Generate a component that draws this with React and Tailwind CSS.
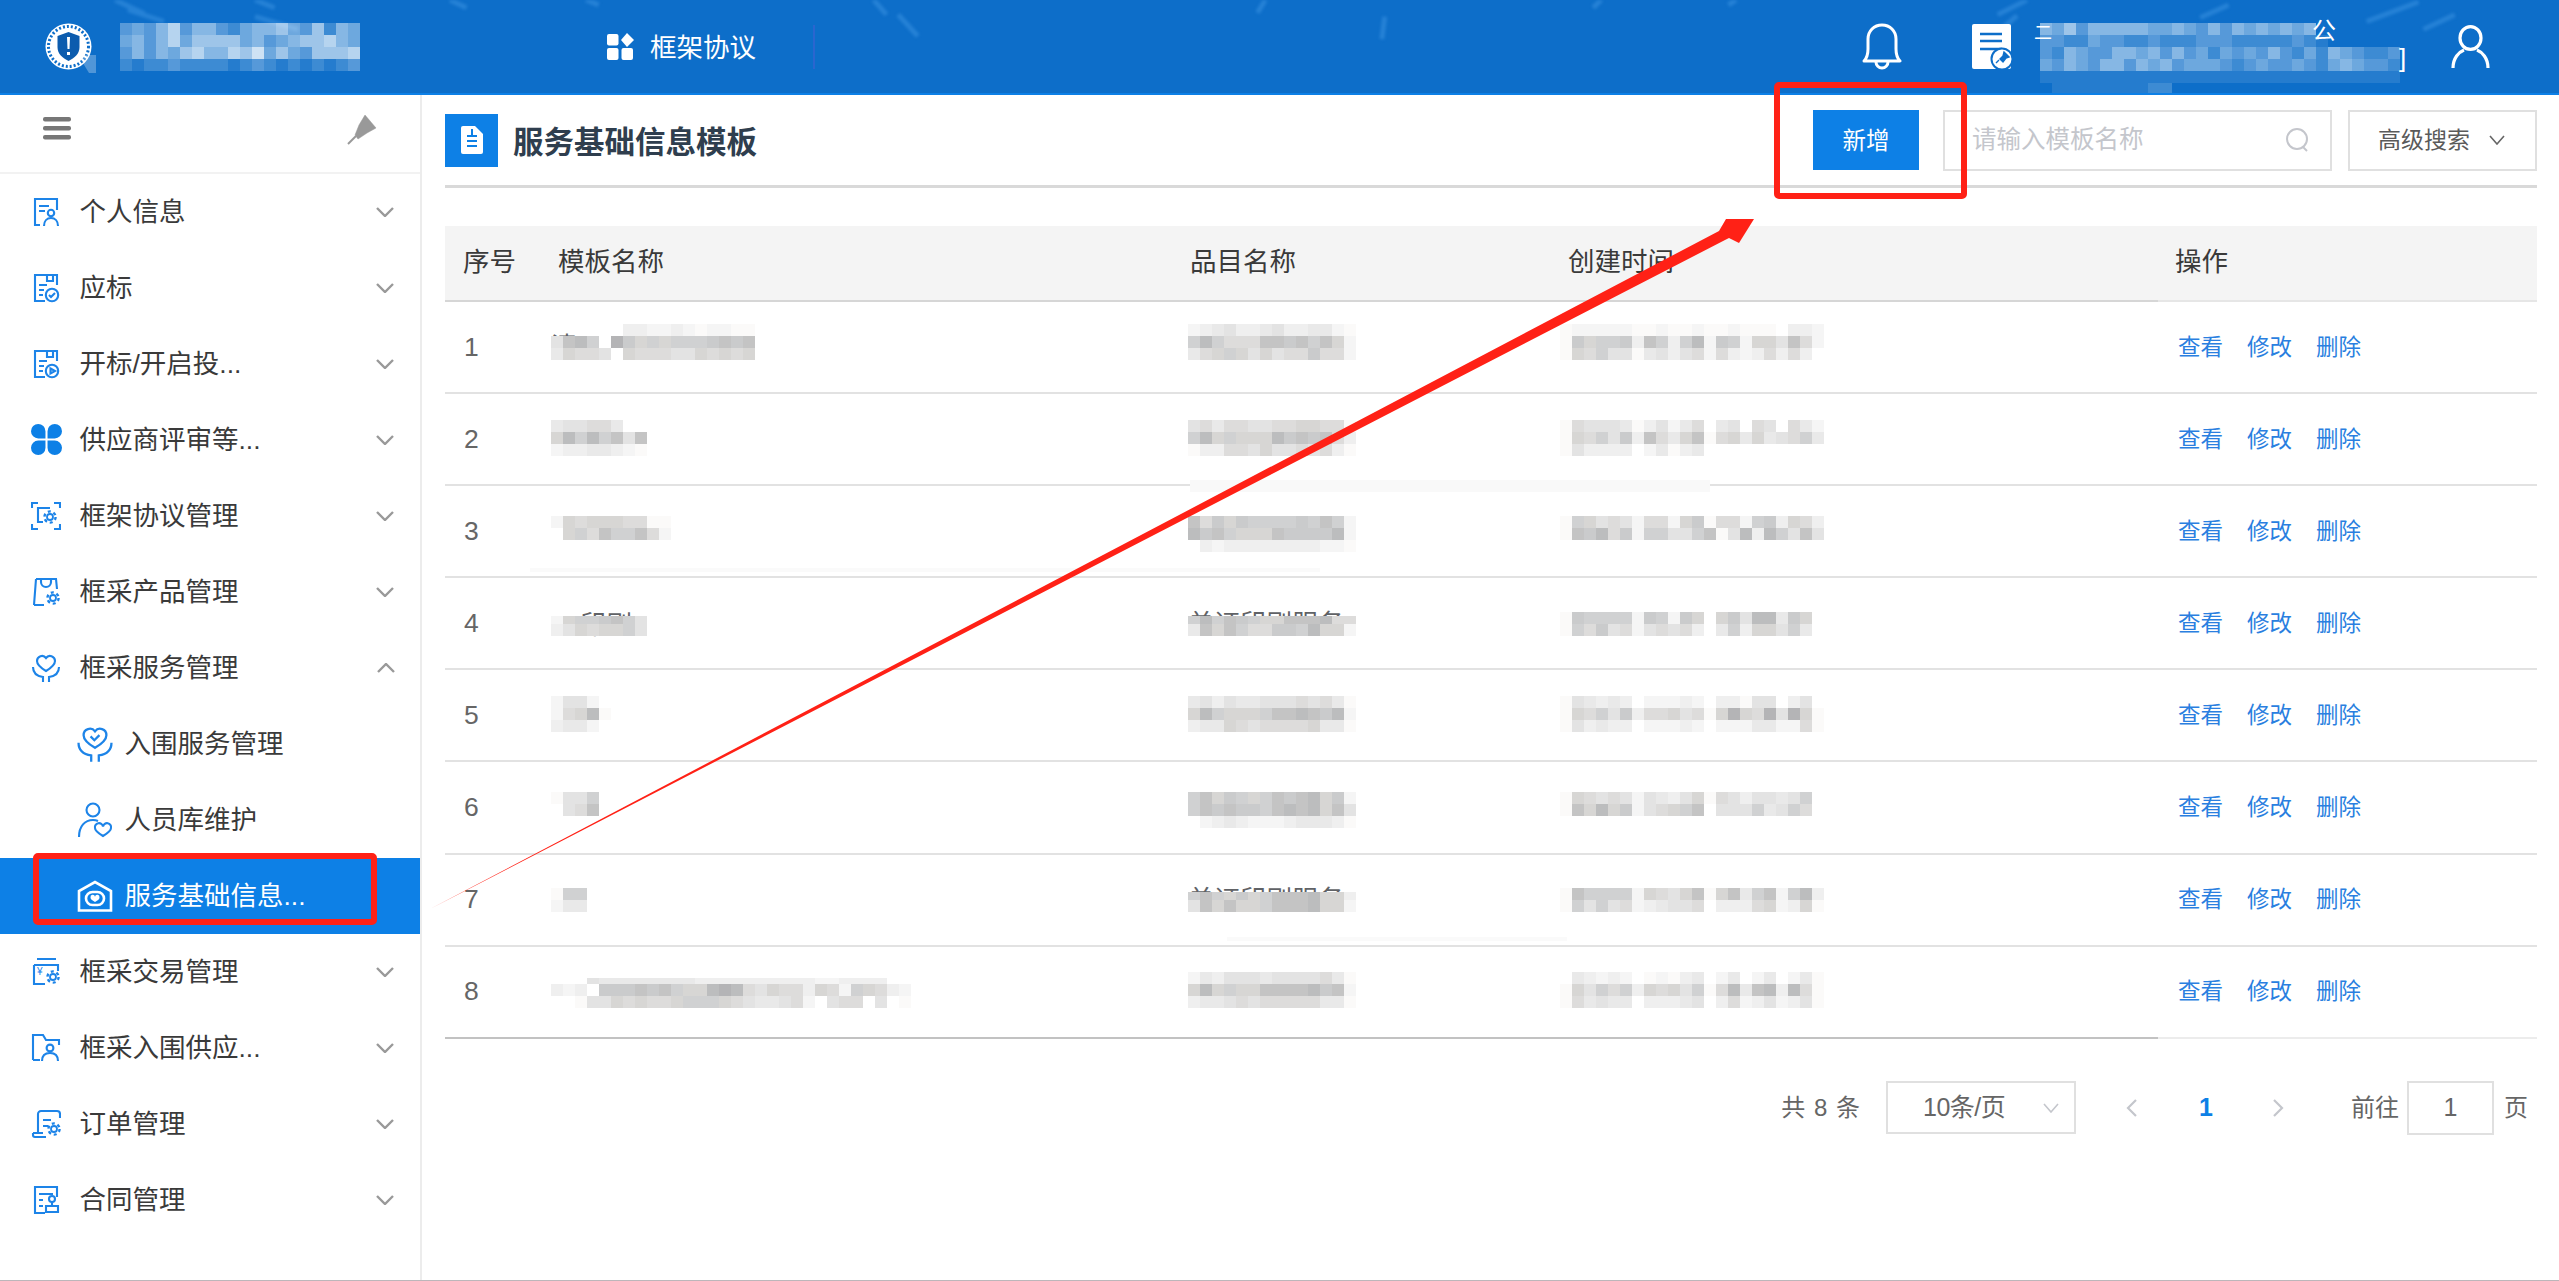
import React from 'react';

const GRAYS = { 0: '#ffffff', 1: '#fbfaf9', 2: '#f5f5f5', 3: '#efefef', 4: '#e9e9e9', 5: '#e3e3e3', 6: '#dddcdb', 7: '#d7d6d4', 8: '#d0d1d2', 9: '#cacbcc', a: '#c4c4c4', b: '#bcbdbe', c: '#b4b4b6' };

// one pixelated block, every char in a row is a 12px cell ("_" shows what is behind)
const Mosaic = ({ rows, first = 12, light, peek, peekClass }) => (
    <div className="relative w-max">
        {peek && <span className={`absolute left-0 whitespace-nowrap text-[26px] leading-[30px] text-[#606266] ${peekClass}`}>{peek}</span>}
        <div className="relative">
            {rows.map((row, i) => (
                <div key={i} className="flex" style={{ height: i === 0 ? first : 12 }}>
                    {row.split('').map((c, j) => (
                        <div
                            key={j}
                            className="w-[12px] h-full"
                            style={{
                                backgroundColor: light
                                    ? `rgba(255,255,255,${c === '_' ? 0 : parseInt(c, 10) / 10})`
                                    : c === '_' ? 'transparent' : GRAYS[c],
                            }}
                        ></div>
                    ))}
                </div>
            ))}
        </div>
    </div>
);

const Gear = ({ x, y }) => (
    <g>
        <circle cx={x} cy={y} r="3" fill="none" strokeWidth="1.8" />
        <circle cx={x} cy={y} r="5.6" fill="none" strokeWidth="2.4" strokeDasharray="3 2.87" />
    </g>
);

const Ic = ({ children, box = 30, size = 30, stroke = '#1d84e8', sw = 2.1 }) => (
    <svg width={size} height={size} viewBox={`0 0 ${box} ${box}`} fill="none" stroke={stroke} strokeWidth={sw} className="shrink-0">
        {children}
    </svg>
);

const heart = 'M15 18c-5-3-9-6-9-10a5 5 0 0 1 9-3 5 5 0 0 1 9 3c0 4-4 7-9 10z';
const hands = 'M2 14c0 6 3 9 10 10v5M28 14c0 6-3 9-10 10v5';

const icons = {
    person: <Ic><path d="M26 13V2H4v26h5M8 9h10M8 14h6M13 29c0-5 3-8 7-8s7 3 7 8" /><circle cx="20" cy="16" r="3.2" /></Ic>,
    bid: <Ic><path d="M26 12V2H4v26h10M16 2v6h6V2M8 12h8M8 17h5M8 22h4M18 22l2 2 4-4" /><circle cx="21" cy="22" r="6.2" /></Ic>,
    open: <Ic><path d="M26 12V2H4v26h10M16 2v6h6V2M8 12h8M8 17h5M8 22h4" /><circle cx="21" cy="22" r="6.2" /><path d="M19.5 19.5l4.5 2.5-4.5 2.5z" /></Ic>,
    clover: (
        <svg width="31" height="31" viewBox="0 0 30 30" fill="#0d80e6" className="shrink-0">
            <path d="M14 14H7A7 7 0 1 1 14 7ZM16 14V7a7 7 0 1 1 7 7ZM14 16v7a7 7 0 1 1-7-7ZM16 16h7a7 7 0 1 1-7 7Z" />
        </svg>
    ),
    frame: <Ic><path d="M1 7V2h6M23 2h6v5M1 23v5h6M23 28h6v-5M19 7H7v14h5" /><Gear x={19} y={16} /></Ic>,
    bag: <Ic><path d="M5 2h20l1 10M3 28L5 2M3 28h10M10 2v3a5 5 0 0 0 10 0V2" /><Gear x={22} y={21} /></Ic>,
    heart: <Ic><path d={heart} /><path d={hands} /></Ic>,
    trade: <Ic><path d="M6 2h19M3 8h24v6M3 8v19h11" /><Gear x={22} y={20} /><text x="6" y="18" fontSize="10" stroke="none" fill="#1d84e8">¥</text></Ic>,
    folder: <Ic><path d="M2 27V2h10l3 5h13v5M2 27h7M11 28c0-5 3-8 8-8s8 3 8 8" /><circle cx="19" cy="15" r="3.4" /></Ic>,
    order: <Ic><path d="M7 24V5a3 3 0 0 1 3-3h16a3 3 0 0 1 3 3v4M2 24v2a2 2 0 0 0 2 2h11M2 24h10M12 11h8M12 17h5" /><Gear x={23} y={20} /></Ic>,
    contract: <Ic><path d="M26 12V2H4v26h10M8 9h14M8 15h4M8 21h4" /><circle cx="21" cy="14" r="3" /><path d="M21 17v4M15 21h12v6H15z" /></Ic>,
    inHeart: <Ic box={30} size={38} sw={1.8}><path d={heart} /><path d={hands} /><path d="M11.5 9l3 3 4-4" /></Ic>,
    staff: (
        <Ic box={36} size={36}>
            <circle cx="16" cy="8" r="6.5" />
            <path d="M2 35c0-11 6-17 14-17 2 0 3.5.3 5 1M26 34c-5-3-8-5-8-8a4 4 0 0 1 8-1.5 4 4 0 0 1 8 1.5c0 3-3 5-8 8z" />
        </Ic>
    ),
    house: (
        <svg width="36" height="32" viewBox="0 0 36 32" fill="none" stroke="#fff" strokeWidth="2.6" className="shrink-0">
            <path d="M2 30.5V11L18 2l16 9v19.5z" />
            <rect x="9" y="12" width="18" height="13" rx="6.5" />
            <path d="M18 22c-3-1.800-4.500-3-4.500-4.600a2.200 2.200 0 0 1 4.500-.6 2.200 2.200 0 0 1 4.500.6c0 1.600-1.500 2.800-4.500 4.600z" fill="#fff" stroke="none" />
        </svg>
    ),
};

const Chevron = ({ up }) => (
    <svg width="18" height="10" viewBox="0 0 18 10" fill="none" stroke="#999999" strokeWidth="2.4" className={`shrink-0 ${up ? 'rotate-180' : ''}`}>
        <polyline points="1,1 9,9 17,1" />
    </svg>
);

const menu = [
    { t: '个人信息', i: 'person' },
    { t: '应标', i: 'bid' },
    { t: '开标/开启投...', i: 'open' },
    { t: '供应商评审等...', i: 'clover' },
    { t: '框架协议管理', i: 'frame' },
    { t: '框采产品管理', i: 'bag' },
    { t: '框采服务管理', i: 'heart', up: true },
    { t: '入围服务管理', i: 'inHeart', sub: true },
    { t: '人员库维护', i: 'staff', sub: true },
    { t: '服务基础信息...', i: 'house', sub: true, active: true },
    { t: '框采交易管理', i: 'trade' },
    { t: '框采入围供应...', i: 'folder' },
    { t: '订单管理', i: 'order' },
    { t: '合同管理', i: 'contract' },
];

const rows = [
    {
        n: 1,
        nameCls: 'mt-[22.14px]',
        name: ['______33223212211', '5ab80c97878889a9a', '47665076665576767'],
        peek: '清',
        peekClass: 'top-[8px]',
        catCls: 'mt-[22.14px]',
        cat: ['23453345334421', '8b8666aa9a8a72', '46787575669662'],
        timeCls: 'mt-[22.14px]',
        time: ['1222221121121121110332', '1978893a838b2982775a62', '1768551453562632363630'],
    },
    {
        n: 2,
        nameCls: 'mt-[26px]',
        name: ['45566400', '7b8b8a5a', '23344321'],
        catCls: 'mt-[26px]',
        cat: ['56466556677661', '8b78777b9a9a63', '13366575565631'],
        timeCls: 'mt-[26px]',
        time: ['1655541352460450650642', '1768593a647a1674745684', '1533330241340000000000'],
        patch: 'top-[86px] left-[745px] w-[520px] h-[12px] bg-[#f9f9f9]',
    },
    {
        n: 3,
        nameCls: 'mt-[29.86px]',
        name: ['2767776611', '0786a88a62'],
        catCls: 'mt-[29.86px]',
        cat: ['a6979888898a82', 'b9a8777a9999b2', '03233333333221'],
        timeCls: 'mt-[29.86px]',
        time: ['1875652662791662893763', '1a9b69288558a15b3b85a5'],
    },
    {
        n: 4,
        nameCls: 'mt-[37.72px]',
        name: ['27889a85', '35767785'],
        first: 8,
        peek: '22印刷',
        peekClass: 'top-[-6px]',
        catCls: 'mt-[37.72px]',
        cat: ['8b8a9877aaab66', '4a7a866998b772'],
        catPeek: '单证印刷服务',
        timeCls: 'mt-[33.72px]',
        time: ['1988882982970795bb4970', '1869562565630483775840'],
        patch: 'top-[-10px] left-[85px] w-[790px] h-[4px] bg-[#fafafa]',
    },
    {
        n: 5,
        nameCls: 'mt-[25.58px]',
        name: ['25520', '267b1', '34420'],
        catCls: 'mt-[25.58px]',
        cat: ['45354455565641', '7b87778aaba9b2', '34476566667441'],
        timeCls: 'mt-[25.58px]',
        time: ['1543430222320331550350', '17685936675617c76c5c71', '1534330222320222442261'],
    },
    {
        n: 6,
        nameCls: 'mt-[29.44px]',
        name: ['1558', '056a'],
        catCls: 'mt-[29.44px]',
        cat: ['8a79878a9ab792', '8a9a998abab7a5', '02343222344431'],
        timeCls: 'mt-[29.44px]',
        time: ['1765652543571653554580', '1a7b7925678a0555845860'],
    },
    {
        n: 7,
        nameCls: 'mt-[33.3px]',
        name: ['188', '244'],
        catCls: 'mt-[37.3px]',
        cat: ['8a87978aaab773', '5a7a778aaab772'],
        catPeek: '单证印刷服务',
        timeCls: 'mt-[33.3px]',
        time: ['1a888827657a17a48a28b3', '1858562345560333672371'],
        patch: 'top-[82px] left-[782px] w-[340px] h-[4px] bg-[#fafafa]',
    },
    {
        n: 8,
        nameCls: 'mt-[31.16px]',
        name: ['___5444444443333333333223333___', '3230999a9a877bcb65766376287632', '001557676678887654456205660501'],
        first: 6,
        catCls: 'mt-[25.16px]',
        cat: ['24355545555641', '7b7877aaaab9a2', '34456566666441'],
        timeCls: 'mt-[25.16px]',
        time: ['0432320121340240240241', '17586837675816b4ab3b61', '1645440333450362352351'],
    },
];

const App = () => {
    return (
        <div className="relative w-[2559px] h-[1281px] overflow-hidden bg-white flex flex-col text-[#333333] [font-family:'Liberation_Sans','Noto_Sans_CJK_SC',sans-serif]">
            {/* top bar */}
            <header className="relative h-[95px] shrink-0 flex items-center overflow-hidden bg-[#0d6ec9] border-b-2 border-[#0d80e6] text-white">
                <svg className="absolute inset-0 w-full h-full blur-[1.5px]" viewBox="0 0 2559 95" fill="none" stroke="#4aa0ec">
                    <g strokeOpacity="0.4" strokeWidth="5">
                        <path d="M103 10L140 22M90 0l30 14M233 17l44 13M233 0l20 8M432 0l17 8M571 0l13 5" />
                        <path d="M865 0l13 15M890 15l20 22M1265 0l-8 13M1387 17l-3 23M1608 0l-8 8M1746 0l-8 5" />
                        <path d="M2013 15l30-15M2013 33l20-17M2390 22l53-20M2220 18l29-13M2448 30l32-15" />
                    </g>
                </svg>

                <div className="relative ml-[45px] flex items-center">
                    <svg width="47" height="47" viewBox="0 0 47 47" className="shrink-0 overflow-visible">
                        <circle cx="23.500" cy="23.500" r="23" fill="#ffffff" />
                        <circle cx="23.500" cy="23.500" r="20" fill="none" stroke="#0d6ec9" strokeWidth="3" strokeDasharray="2 2" />
                        <path d="M23.500 9l11 4v11c0 7-5 11-11 14-6-3-11-7-11-14V13z" fill="#0c5cae" />
                        <path d="M22 14h3l-.5 12h-2zM22 29h3v3h-3z" fill="#ffffff" />
                        <polygon points="33,32 51,32 51,50 44,50" fill="#ffffff" fillOpacity="0.28" />
                    </svg>
                    <div className="ml-[28px]">
                        <Mosaic light rows={['34357355324556436254', '45357466664534566754', '35354675576846436667', '21223222212321212123']} />
                    </div>
                </div>

                <div className="relative ml-[247px] flex items-center">
                    <svg width="27" height="27" viewBox="0 0 27 27" fill="#fff" className="shrink-0">
                        <rect x="0" y="1" width="11.500" height="11.500" rx="2" />
                        <path d="M20 0l7 7-7 7-6-7z" />
                        <rect x="0" y="15" width="11.500" height="12" rx="2" />
                        <rect x="14.500" y="15" width="11.500" height="12" rx="2" />
                    </svg>
                    <span className="ml-[16px] pt-[3px] text-[26.5px] leading-none">框架协议</span>
                    <div className="ml-[57px] w-[2px] h-[44px] bg-[#2a66cf]"></div>
                </div>

                <div className="relative ml-auto mr-[69px] flex items-center">
                    <svg width="40" height="47" viewBox="0 0 40 47" fill="none" stroke="#fff" strokeWidth="3" className="shrink-0">
                        <path d="M2 38c3-3 4-6 4-12V16C6 8 12 2 20 2s14 6 14 14v10c0 6 1 9 4 12z" strokeLinejoin="round" />
                        <path d="M14 39a6 6 0 0 0 12 0" />
                    </svg>
                    <svg width="43" height="46" viewBox="0 0 43 46" className="ml-[70px] shrink-0">
                        <rect x="0" y="0" width="39" height="45" rx="2" fill="#fff" />
                        <path d="M8 10h22M8 17h22M8 25h22" stroke="#0d6ec9" strokeWidth="2.400" />
                        <circle cx="30" cy="35" r="10.500" fill="#fff" stroke="#0d6ec9" strokeWidth="2" />
                        <path d="M32 28l5 5-3 1-3 4-3-3 3-3zM27 36l-3 3" fill="#0d6ec9" stroke="#0d6ec9" strokeWidth="1.400" />
                    </svg>
                    <div className="relative ml-[25px] self-start mt-[24px] w-[360px] h-[72px]">
                        <span className="absolute left-[272px] top-[-6px] text-[24px] leading-[28px]">公</span>
                        <span className="absolute left-[-6px] top-[1px] text-[18px] leading-[18px]">二</span>
                        <span className="absolute left-[359px] top-[22px] text-[26px] leading-[26px] font-light">]</span>
                        <Mosaic
                            light
                            rows={[
                                '54635555544543535454545',
                                '332243322322233322222321',
                                '325433554535342434353242543223',
                                '435435535453444323433432454332',
                                '111111111111111111111111111111',
                                '_1111111122',
                            ]}
                        />
                    </div>
                    <svg width="39" height="43" viewBox="0 0 39 43" fill="none" stroke="#fff" strokeWidth="3.200" className="ml-[51px] shrink-0">
                        <ellipse cx="19.500" cy="13" rx="10.500" ry="11.400" />
                        <path d="M2 43c0-10 6-16 11-18M37 43c0-10-6-16-11-18" />
                    </svg>
                </div>
            </header>

            <div className="flex flex-1 min-h-0">
                {/* side menu */}
                <aside className="w-[422px] shrink-0 border-r-2 border-[#ececec] flex flex-col">
                    <div className="h-[78.5px] shrink-0 border-b-2 border-[#f2f2f2] flex items-center justify-between pl-[43px] pr-[43px]">
                        <svg width="28" height="23" viewBox="0 0 28 23" fill="#777777" className="mb-[10px]">
                            <rect width="28" height="4.500" rx="2" />
                            <rect y="9" width="28" height="4.500" rx="2" />
                            <rect y="18" width="28" height="4.500" rx="2" />
                        </svg>
                        <svg width="30" height="30" viewBox="0 0 30 30" fill="#999999" stroke="#999999" className="mb-[7px]">
                            <path d="M18 0l11 13-9 5-9 6-3-4 4-10z" strokeWidth="0.500" />
                            <path d="M9 21l-8 8" strokeWidth="2" />
                        </svg>
                    </div>
                    {menu.map((m) => (
                        <div
                            key={m.t}
                            className={`h-[76px] shrink-0 flex items-center text-[26.5px] ${m.sub ? 'pl-[76px]' : 'pl-[31px]'} ${m.active ? 'bg-[#0d80e6] text-white' : 'text-[#3a3a3a]'}`}
                        >
                            <span className={`flex justify-center ${m.sub ? 'w-[38px] mr-[10.5px]' : 'w-[30px] mr-[18.5px]'}`}>{icons[m.i]}</span>
                            <span className="whitespace-nowrap pt-[3px]">{m.t}</span>
                            {!m.sub && (
                                <span className={`ml-auto flex ${m.up ? 'mr-[25px]' : 'mr-[26px]'}`}>
                                    <Chevron up={m.up} />
                                </span>
                            )}
                        </div>
                    ))}
                </aside>

                {/* content */}
                <main className="flex-1 min-w-0 pl-[23px] pr-[22px] flex flex-col">
                    <div className="h-[93px] shrink-0 flex items-center border-b-[3px] border-[#d9d9d9]">
                        <div className="w-[53px] h-[53px] bg-[#0d80e6] flex items-center justify-center">
                            <svg width="22" height="28" viewBox="0 0 22 28" fill="#fff">
                                <path d="M2 0h12l8 8v18a2 2 0 0 1-2 2H2a2 2 0 0 1-2-2V2a2 2 0 0 1 2-2z" />
                                <path d="M11 3v6M6 10h10M6 15h10M6 20h10" stroke="#0d80e6" strokeWidth="2" />
                            </svg>
                        </div>
                        <h1 className="ml-[15px] pt-[5px] text-[30.5px] font-bold text-[#2f3e4e] leading-none">服务基础信息模板</h1>

                        <div className="ml-auto flex items-center">
                            <button className="w-[106px] h-[60px] pt-[3px] bg-[#0d80e6] text-white text-[23.5px]">新增</button>
                            <div className="ml-[24px] w-[389px] h-[61px] border-2 border-[#e0e0e0] flex items-center pl-[27px] pr-[20px] justify-between">
                                <span className="pt-[1px] text-[24.5px] text-[#c4c6cc]">请输入模板名称</span>
                                <svg width="24" height="24" viewBox="0 0 24 24" fill="none" stroke="#c4c6cc" strokeWidth="2">
                                    <circle cx="11" cy="11" r="10" />
                                    <path d="M17 19l4 4" />
                                </svg>
                            </div>
                            <div className="ml-[16px] w-[189px] h-[61px] border-2 border-[#e0e0e0] flex items-center pl-[28px] text-[23px] text-[#5a5a5a]">
                                <span className="pt-[1px]">高级搜索</span>
                                <svg width="16" height="10" viewBox="0 0 16 10" fill="none" stroke="#666666" strokeWidth="1.600" className="ml-[19px]">
                                    <polyline points="1,1 8,9 15,1" />
                                </svg>
                            </div>
                        </div>
                    </div>

                    <div className="mt-[38px]">
                        <div className="flex h-[75.86px] bg-[#f4f4f4] text-[26.5px] text-[#3a3a3a]">
                            <div className="w-[1713px] flex items-center border-b-[2px] border-[#d6d6d6]">
                                <span className="w-[113px] pl-[18px]">序号</span>
                                <span className="w-[632px]">模板名称</span>
                                <span className="w-[378px]">品目名称</span>
                                <span>创建时间</span>
                            </div>
                            <div className="flex-1 flex items-center pl-[17px] border-b-[2px] border-[#e6e6e6]">操作</div>
                        </div>
                        {rows.map((r, i) => {
                            const last = i === rows.length - 1;
                            return (
                                <div key={r.n} className="relative flex h-[92.14px]">
                                    <div className={`w-[1713px] flex border-b-[2px] ${last ? 'border-[#c2c2c2]' : 'border-[#e2e2e2]'}`}>
                                        <div className="w-[106px] pl-[19px] pt-[1px] flex items-center text-[26.5px] text-[#666666]">{r.n}</div>
                                        <div className={`w-[637px] ${r.nameCls}`}>
                                            <Mosaic rows={r.name} first={r.first ?? 12} peek={r.peek} peekClass={r.peekClass} />
                                        </div>
                                        <div className={`w-[372px] ${r.catCls}`}>
                                            <Mosaic rows={r.cat} first={r.catPeek ? 8 : 12} peek={r.catPeek} peekClass="top-[-7px]" />
                                        </div>
                                        <div className={`flex-1 ${r.timeCls}`}>
                                            <Mosaic rows={r.time} />
                                        </div>
                                    </div>
                                    <div className={`flex-1 flex items-center pt-[1px] pl-[20px] gap-[24px] text-[22.5px] text-[#2a7fe0] border-b-[2px] ${last ? 'border-[#ececec]' : 'border-[#e2e2e2]'}`}>
                                        <span>查看</span>
                                        <span>修改</span>
                                        <span>删除</span>
                                    </div>
                                    {r.patch && <div className={`absolute ${r.patch}`}></div>}
                                </div>
                            );
                        })}
                    </div>

                    {/* pager */}
                    <div className="mt-[42px] flex items-center justify-end pr-[9px] text-[24px] text-[#666666]">
                        <span className="tracking-[1px]">共 8 条</span>
                        <div className="ml-[25px] w-[190px] h-[53px] border-2 border-[#e0e0e0] flex items-center pl-[35px] pr-[15px] justify-between">
                            <span className="text-[25px] tracking-[-0.5px]">10条/页</span>
                            <svg width="16" height="10" viewBox="0 0 16 10" fill="none" stroke="#c4c6cc" strokeWidth="1.600">
                                <polyline points="1,1 8,9 15,1" />
                            </svg>
                        </div>
                        <svg width="11" height="18" viewBox="0 0 11 18" fill="none" stroke="#c4c6cc" strokeWidth="2.200" className="ml-[50px]">
                            <polyline points="10,1 2,9 10,17" />
                        </svg>
                        <span className="ml-[62px] w-[11px] text-[#0d80e6] font-bold text-[25px] leading-none">1</span>
                        <svg width="11" height="18" viewBox="0 0 11 18" fill="none" stroke="#c4c6cc" strokeWidth="2.200" className="ml-[63px]">
                            <polyline points="1,1 9,9 1,17" />
                        </svg>
                        <span className="ml-[67px]">前往</span>
                        <div className="ml-[8px] w-[87px] h-[54px] border-2 border-[#e0e0e0] flex items-center justify-center text-[25px]">1</div>
                        <span className="ml-[10px]">页</span>
                    </div>
                </main>
            </div>

            <div className="h-[1px] bg-[#bcb6ba] shrink-0"></div>

            {/* red marks drawn on top of the page */}
            <svg className="absolute inset-0 pointer-events-none" width="2559" height="1281" viewBox="0 0 2559 1281">
                <polygon points="430,909 1719,231 1726,219 1754,219 1739,243 1729,238 1725,240" fill="#ff2116" />
            </svg>
            <div className="absolute left-[1774px] top-[82px] w-[193px] h-[117px] border-[6px] border-[#ff2116] rounded-[5px]"></div>
            <div className="absolute left-[33px] top-[853px] w-[344px] h-[72px] border-[6px] border-[#ff2116] rounded-[5px]"></div>
        </div>
    );
};

export default App;
